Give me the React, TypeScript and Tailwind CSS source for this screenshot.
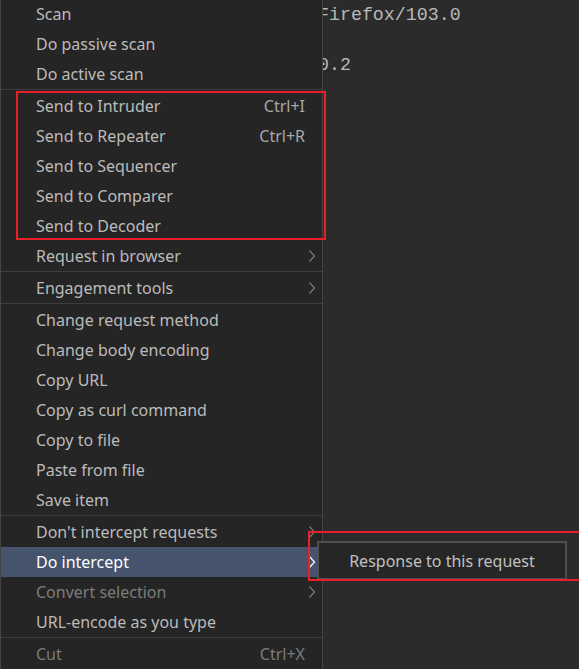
import React from "react";

type Item =
  | { kind: "sep" }
  | { kind: "item"; label: string; shortcut?: string; sub?: boolean; disabled?: boolean; active?: boolean };

const items: Item[] = [
  { kind: "item", label: "Scan" },
  { kind: "item", label: "Do passive scan" },
  { kind: "item", label: "Do active scan" },
  { kind: "sep" },
  { kind: "item", label: "Send to Intruder", shortcut: "Ctrl+I" },
  { kind: "item", label: "Send to Repeater", shortcut: "Ctrl+R" },
  { kind: "item", label: "Send to Sequencer" },
  { kind: "item", label: "Send to Comparer" },
  { kind: "item", label: "Send to Decoder" },
  { kind: "item", label: "Request in browser", sub: true },
  { kind: "sep" },
  { kind: "item", label: "Engagement tools", sub: true },
  { kind: "sep" },
  { kind: "item", label: "Change request method" },
  { kind: "item", label: "Change body encoding" },
  { kind: "item", label: "Copy URL" },
  { kind: "item", label: "Copy as curl command" },
  { kind: "item", label: "Copy to file" },
  { kind: "item", label: "Paste from file" },
  { kind: "item", label: "Save item" },
  { kind: "sep" },
  { kind: "item", label: "Don't intercept requests", sub: true },
  { kind: "item", label: "Do intercept", sub: true, active: true },
  { kind: "item", label: "Convert selection", sub: true, disabled: true },
  { kind: "item", label: "URL-encode as you type" },
  { kind: "sep" },
  { kind: "item", label: "Cut", shortcut: "Ctrl+X", disabled: true },
];

function Chevron({ color }: { color: string }) {
  return (
    <svg width="8" height="14" viewBox="0 0 8 14" fill="none">
      <path d="M1.5 1.5 L6.5 7 L1.5 12.5" stroke={color} strokeWidth="1.2" />
    </svg>
  );
}

export default function App() {
  return (
    <div className="relative w-[579px] h-[669px] overflow-hidden bg-[#2b2b2b] font-['Noto_Sans',sans-serif]">
      {/* editor text, the rest of each line sits under the menu */}
      <div className="pt-[3px] pl-[318px] font-['Liberation_Mono',monospace] text-[18.3px] leading-[25px] text-[#b8b8b8] whitespace-pre">
        <div>Firefox/103.0</div>
        <div> </div>
        <div>0.2</div>
      </div>

      {/* context menu (scrolled 1px past its top edge) */}
      <div className="absolute left-0 top-[-1px] w-[323px] h-[671px] bg-[#252525] border-r border-l border-[#444444] text-[16px]">
        {items.map((it, i) =>
          it.kind === "sep" ? (
            <div key={i} className="h-[2px] border-t border-[#3e3e3e]" />
          ) : (
            <div
              key={i}
              className={
                "h-[30px] flex items-center pl-[35px] pr-[6px] " +
                (it.active ? "bg-[#45536d] text-white" : it.disabled ? "text-[#7c7c7c]" : "text-[#bbbbbb]")
              }
            >
              <span>{it.label}</span>
              {it.shortcut && (
                <span className={"ml-auto mr-[11px] " + (it.disabled ? "text-[#7c7c7c]" : "text-[#a8a8a8]")}>
                  {it.shortcut}
                </span>
              )}
              {it.sub && (
                <span className="ml-auto">
                  <Chevron color={it.active ? "#ffffff" : "#7a7a7a"} />
                </span>
              )}
            </div>
          )
        )}
      </div>

      {/* submenu */}
      <div className="absolute left-[317px] top-[541px] w-[250px] h-[39px] bg-[#262626] border-2 border-[#4f4f4f] flex items-center justify-center text-[16px] text-[#c0c0c0]">
        Response to this request
      </div>

      {/* annotation boxes */}
      <div className="absolute left-[16px] top-[91px] w-[310px] h-[149px] border-2 border-[#e8202a]" />
      <div className="absolute left-[308px] top-[531px] w-[290px] h-[50px] border-2 border-[#e8202a]" />
    </div>
  );
}
